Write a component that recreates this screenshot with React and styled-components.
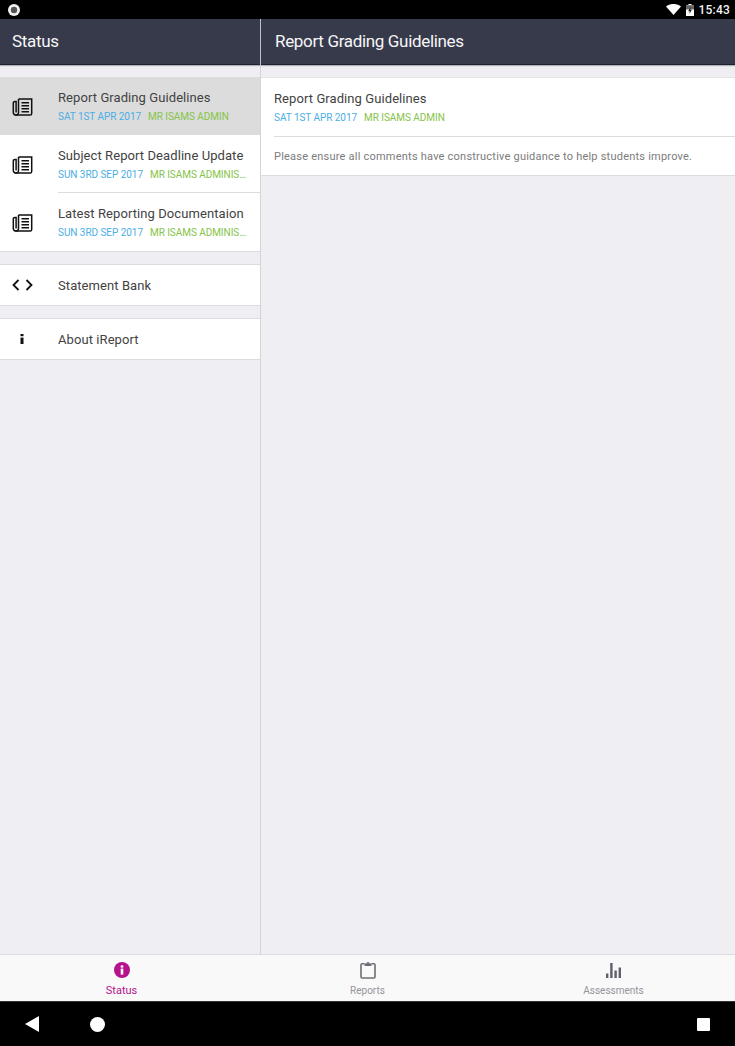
import React from "react"
import styled, { createGlobalStyle } from "styled-components"

const GlobalStyle = createGlobalStyle`
  html, body {
    margin: 0;
    padding: 0;
    background: #000;
  }
  * {
    box-sizing: border-box;
  }
`

const Screen = styled.div`
  width: 735px;
  height: 1046px;
  display: flex;
  flex-direction: column;
  overflow: hidden;
  font-family: Roboto, "Liberation Sans", sans-serif;
  background: #eeeef3;
`

const StatusBar = styled.div`
  height: 19px;
  flex: none;
  background: #000;
  display: flex;
  align-items: center;
  justify-content: space-between;
  padding: 0 5px 0 8px;
`

const StatusRight = styled.div`
  display: flex;
  align-items: center;
  gap: 5px;
`

const Clock = styled.span`
  color: #f2f2f2;
  font-size: 12px;
  font-weight: 500;
  letter-spacing: 0.2px;
`

const Panes = styled.div`
  flex: 1;
  min-height: 0;
  display: flex;
`

const LeftPane = styled.div`
  width: 261px;
  flex: none;
  border-right: 1px solid #d3d3d8;
  display: flex;
  flex-direction: column;
`

const RightPane = styled.div`
  flex: 1;
  display: flex;
  flex-direction: column;
`

const Header = styled.div`
  height: 46px;
  flex: none;
  background: #363a4a;
  border-bottom: 1px solid #1f2233;
  box-shadow: 0 1px 1px rgba(60, 60, 80, 0.35);
  display: flex;
  align-items: center;
  padding: 0 0 2px ${(p) => p.$inset}px;
  color: #f6f6f8;
  font-size: 17px;
  letter-spacing: -0.33px;
`

const Group = styled.div`
  background: #fff;
  border-bottom: ${(p) => (p.$flush ? "none" : "1px solid #dcdce0")};
  border-top: ${(p) => (p.$flush ? "none" : "1px solid #dcdce0")};
  margin-top: ${(p) => p.$top}px;
`

const Row = styled.div`
  height: ${(p) => p.$height}px;
  display: flex;
  align-items: center;
  background: ${(p) => (p.$active ? "#dcdcdc" : "transparent")};
  border-bottom: ${(p) => (p.$closing ? "1px solid #dcdce0" : "none")};
`

const IconSlot = styled.div`
  width: 44px;
  flex: none;
  display: flex;
  justify-content: center;
  padding-top: ${(p) => (p.$drop ? 2 : 0)}px;
  color: #111;
`

const RowBody = styled.div`
  flex: 1;
  min-width: 0;
  margin-left: 14px;
  align-self: stretch;
  display: flex;
  flex-direction: column;
  justify-content: center;
  padding-top: ${(p) => (p.$divider ? 2 : p.$nudge || 0)}px;
  border-bottom: ${(p) => (p.$divider ? "1px solid #dcdce0" : "none")};
`

const Title = styled.div`
  color: #424242;
  font-size: 13px;
  letter-spacing: 0.08px;
  line-height: 16px;
  white-space: nowrap;
`

const Meta = styled.div`
  display: flex;
  gap: 7px;
  margin-top: 5px;
  font-size: 10px;
  letter-spacing: -0.05px;
  line-height: 12px;
  white-space: nowrap;
  padding-right: 12px;
`

const MetaDate = styled.span`
  color: #4aaee4;
  flex: none;
`

const MetaAuthor = styled.span`
  color: #85c448;
  overflow: hidden;
  text-overflow: ellipsis;
`

const DetailCard = styled.div`
  margin-top: 12px;
  background: #fff;
  border-bottom: 1px solid #dcdce0;
  border-top: 1px solid #e4e4e8;
  padding-left: 13px;
`

const DetailHead = styled.div`
  height: 59px;
  display: flex;
  flex-direction: column;
  justify-content: center;
  border-bottom: 1px solid #dcdce0;
`

const DetailText = styled.div`
  height: 38px;
  display: flex;
  align-items: center;
  color: #7c7c7c;
  font-size: 11px;
  letter-spacing: 0.22px;
`

const TabBar = styled.div`
  height: 47px;
  flex: none;
  background: #f9f9f9;
  border-top: 1px solid #dcdce0;
  display: grid;
  grid-template-columns: 243px 249px 243px;
`

const Tab = styled.div`
  display: flex;
  flex-direction: column;
  align-items: center;
  padding-top: 5px;
  color: ${(p) => (p.$active ? "#b5128c" : "#94949b")};
  font-size: ${(p) => (p.$active ? 11 : 10)}px;
`

const TabIcon = styled.div`
  height: 20px;
  display: flex;
  align-items: center;
  justify-content: center;
  margin-bottom: ${(p) => (p.$low ? 5 : 4)}px;
`

const NavBar = styled.div`
  height: 45px;
  flex: none;
  background: #000;
  border-top: 1px solid #333;
  display: flex;
  align-items: center;
  padding: 0 25px;
`

const NavCircle = styled.div`
  width: 15px;
  height: 15px;
  border-radius: 50%;
  background: #fff;
  margin-left: 51px;
`

const NavSquare = styled.div`
  width: 13px;
  height: 13px;
  border-radius: 1px;
  background: #fff;
  margin-left: auto;
`

const NewsIcon = () => (
  <svg width="21" height="18" viewBox="0 0 21 18" fill="none" stroke="currentColor" strokeWidth="1.5">
    <path d="M6.5 1h13.2v14.4a1.6 1.6 0 0 1-1.6 1.6H3.4" />
    <path d="M6.5 1v13.6a2.3 2.3 0 0 1-2.3 2.4 2.6 2.6 0 0 1-2.9-2.6V5a1.6 1.6 0 0 1 1.6-1.6h1.2v11" />
    <path d="M9.5 4.7h7.5M9.5 7.7h7.5M9.5 10.7h7.5M9.5 13.7h7.5" strokeWidth="1.4" />
  </svg>
)

const CodeIcon = () => (
  <svg width="21" height="12" viewBox="0 0 21 12" fill="none" stroke="currentColor" strokeWidth="1.8">
    <path d="M6.5 1 1.5 6l5 5M14.5 1l5 5-5 5" />
  </svg>
)

const InfoIcon = () => (
  <svg width="4" height="10" viewBox="0 0 4 10" fill="currentColor">
    <rect x="0.5" y="0" width="3" height="2.2" />
    <rect x="0.5" y="3.6" width="3" height="6.4" />
  </svg>
)

const RecordDot = () => (
  <svg width="12" height="12" viewBox="0 0 12 12">
    <circle cx="6" cy="6" r="6" fill="#f2f2f2" />
    <circle cx="6" cy="6" r="3.2" fill="#555" />
  </svg>
)

const Wifi = () => (
  <svg width="15" height="11" viewBox="0 0 15 11">
    <path d="M0 2.6C4-.9 11-.9 15 2.6L7.5 11z" fill="#fff" />
  </svg>
)

const Battery = () => (
  <svg width="8" height="12" viewBox="0 0 8 12">
    <path d="M2.4 0h3.2v1.2H8V12H0V1.2h2.4z" fill="#fff" />
    <path d="M0 1.2h8v4.3H0z" fill="#666" />
    <path d="M4.6 3 2.2 7.2h1.6L3.3 10l2.5-4.2H4.2z" fill="#111" />
  </svg>
)

const StatusTabIcon = () => (
  <svg width="16" height="16" viewBox="0 0 16 16">
    <circle cx="8" cy="8" r="8" fill="#b5128c" />
    <rect x="6.7" y="3.4" width="2.6" height="2.2" fill="#fff" />
    <rect x="6.7" y="6.6" width="2.6" height="6" fill="#fff" />
  </svg>
)

const ClipboardIcon = () => (
  <svg width="16" height="18" viewBox="0 0 16 18" fill="none" stroke="#6d6d78" strokeWidth="1.6">
    <path d="M4.5 2.8H2.2A1.2 1.2 0 0 0 1 4v11.8A1.2 1.2 0 0 0 2.2 17h11.6a1.2 1.2 0 0 0 1.2-1.2V4a1.2 1.2 0 0 0-1.2-1.2h-2.3" />
    <path d="M4.5 5V2.4h2a1.5 1.5 0 0 1 3 0h2V5z" fill="#6d6d78" stroke="none" />
  </svg>
)

const BarsIcon = () => (
  <svg width="15" height="15" viewBox="0 0 15 15" fill="#5f5f6c">
    <rect x="0" y="10.5" width="2.4" height="4.5" />
    <rect x="4.2" y="0" width="2.4" height="15" />
    <rect x="8.4" y="7.5" width="2.4" height="7.5" />
    <rect x="12.6" y="4.5" width="2.4" height="10.5" />
  </svg>
)

const messages = [
  { title: "Report Grading Guidelines", date: "SAT 1ST APR 2017", author: "MR ISAMS ADMIN", active: true },
  { title: "Subject Report Deadline Update", date: "SUN 3RD SEP 2017", author: "MR ISAMS ADMINISTRATOR" },
  { title: "Latest Reporting Documentaion", date: "SUN 3RD SEP 2017", author: "MR ISAMS ADMINISTRATOR" },
]

const App = () => {
  return (
    <Screen>
      <GlobalStyle />
      <StatusBar>
        <RecordDot />
        <StatusRight>
          <Wifi />
          <Battery />
          <Clock>15:43</Clock>
        </StatusRight>
      </StatusBar>
      <Panes>
        <LeftPane>
          <Header $inset={12}>Status</Header>
          <Group $top={12} $flush>
            {messages.map((m, i) => (
              <Row key={m.title} $height={i === 2 ? 59 : 58} $active={m.active} $closing={i === 2}>
                <IconSlot $drop>
                  <NewsIcon />
                </IconSlot>
                <RowBody $divider={i === 1}>
                  <Title>{m.title}</Title>
                  <Meta>
                    <MetaDate>{m.date}</MetaDate>
                    <MetaAuthor>{m.author}</MetaAuthor>
                  </Meta>
                </RowBody>
              </Row>
            ))}
          </Group>
          <Group $top={12}>
            <Row $height={40}>
              <IconSlot>
                <CodeIcon />
              </IconSlot>
              <RowBody $nudge={2}>
                <Title>Statement Bank</Title>
              </RowBody>
            </Row>
          </Group>
          <Group $top={12}>
            <Row $height={40}>
              <IconSlot>
                <InfoIcon />
              </IconSlot>
              <RowBody $nudge={1}>
                <Title>About iReport</Title>
              </RowBody>
            </Row>
          </Group>
        </LeftPane>
        <RightPane>
          <Header $inset={14}>Report Grading Guidelines</Header>
          <DetailCard>
            <DetailHead>
              <Title>Report Grading Guidelines</Title>
              <Meta>
                <MetaDate>SAT 1ST APR 2017</MetaDate>
                <MetaAuthor>MR ISAMS ADMIN</MetaAuthor>
              </Meta>
            </DetailHead>
            <DetailText>Please ensure all comments have constructive guidance to help students improve.</DetailText>
          </DetailCard>
        </RightPane>
      </Panes>
      <TabBar>
        <Tab $active>
          <TabIcon>
            <StatusTabIcon />
          </TabIcon>
          Status
        </Tab>
        <Tab>
          <TabIcon $low>
            <ClipboardIcon />
          </TabIcon>
          Reports
        </Tab>
        <Tab>
          <TabIcon $low>
            <BarsIcon />
          </TabIcon>
          Assessments
        </Tab>
      </TabBar>
      <NavBar>
        <svg width="14" height="16" viewBox="0 0 14 16">
          <path d="M14 0v16L0 8z" fill="#fff" />
        </svg>
        <NavCircle />
        <NavSquare />
      </NavBar>
    </Screen>
  )
}

export default App
